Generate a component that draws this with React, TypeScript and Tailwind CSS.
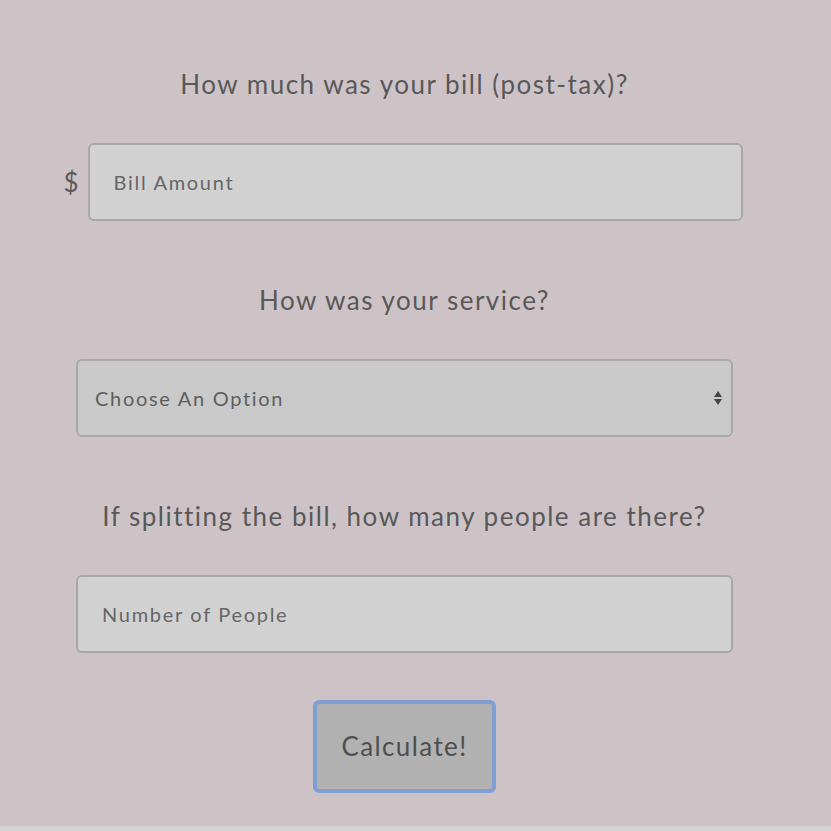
export default function App() {
  const title =
    "text-[26px] leading-none tracking-[1.5px] text-[#585858] font-['Lato','Noto_Sans',sans-serif] text-center";
  const field =
    "h-[78px] rounded-[6px] border-2 border-[#a8a8a8] text-[20px] tracking-[1.7px] text-[#5e5e5e] font-['Lato',sans-serif] outline-none placeholder:text-[#666]";

  return (
    <div className="h-[831px] bg-[#d3d3d3] overflow-hidden">
      <div className="h-[826px] bg-[#cdc3c7]">
        <div className="w-[809px] flex flex-col items-center pt-[71px]">
          <p className={title}>How much was your bill (post-tax)?</p>

          <div className="mt-[46px] flex items-center pr-[3px]">
            <span className="text-[26px] text-[#5a5a5a] font-['Lato',sans-serif] mr-[9px]">$</span>
            <input className={`${field} w-[655px] bg-[#d1d1d1] px-[24px]`} placeholder="Bill Amount" />
          </div>

          <p className={`${title} mt-[66px]`}>How was your service?</p>

          <div className="mt-[46px] relative w-[657px]">
            <select
              className={`${field} w-full appearance-none bg-[#c9c9c9] pl-[17px] text-[#4a4a4a]`}
              defaultValue=""
            >
              <option value="" disabled>
                Choose An Option
              </option>
            </select>
            <svg
              className="absolute right-[10px] top-1/2 -translate-y-1/2"
              width="10"
              height="20"
              viewBox="0 0 10 20"
            >
              <path d="M5 3 L9 9 H1 Z" fill="#444" />
              <path d="M5 17 L9 11 H1 Z" fill="#444" />
            </svg>
          </div>

          <p className={`${title} mt-[66px]`}>If splitting the bill, how many people are there?</p>

          <input
            className={`${field} mt-[46px] w-[657px] bg-[#d1d1d1] px-[24px]`}
            placeholder="Number of People"
          />

          <button className="mt-[47px] w-[183px] h-[93px] rounded-[6px] border-[4px] border-[#7f9fd3] bg-[#b1b1b1] text-[26px] tracking-[1.4px] text-[#4f4f4f] font-['Lato',sans-serif]">
            Calculate!
          </button>
        </div>
      </div>
    </div>
  );
}
